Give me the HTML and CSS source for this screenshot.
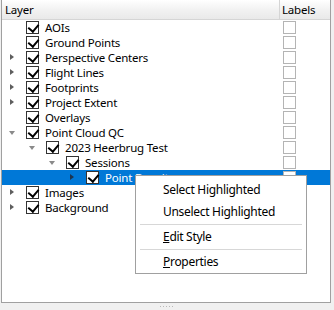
FILE: index.html
```html
<!DOCTYPE html>
<html lang="en">

<head>
  <meta charset="UTF-8">
  <title>Layers</title>
  <link rel="stylesheet" href="styles.css">
</head>

<body>
  <div class="panel">
    <div class="head">
      <div class="col-layer">Layer</div>
      <div class="col-labels">Labels</div>
    </div>

    <div class="rows">
      <div class="row">
        <div class="col-layer"><span class="arrow"></span><span class="check on"></span><span class="name">AOIs</span></div>
        <div class="col-labels"><span class="check"></span></div>
      </div>
      <div class="row">
        <div class="col-layer"><span class="arrow"></span><span class="check on"></span><span class="name">Ground Points</span></div>
        <div class="col-labels"><span class="check"></span></div>
      </div>
      <div class="row">
        <div class="col-layer"><span class="arrow closed"></span><span class="check on"></span><span class="name">Perspective Centers</span></div>
        <div class="col-labels"><span class="check"></span></div>
      </div>
      <div class="row">
        <div class="col-layer"><span class="arrow closed"></span><span class="check on"></span><span class="name">Flight Lines</span></div>
        <div class="col-labels"><span class="check"></span></div>
      </div>
      <div class="row">
        <div class="col-layer"><span class="arrow closed"></span><span class="check on"></span><span class="name">Footprints</span></div>
        <div class="col-labels"><span class="check"></span></div>
      </div>
      <div class="row">
        <div class="col-layer"><span class="arrow closed"></span><span class="check on"></span><span class="name">Project Extent</span></div>
        <div class="col-labels"><span class="check"></span></div>
      </div>
      <div class="row">
        <div class="col-layer"><span class="arrow"></span><span class="check on"></span><span class="name">Overlays</span></div>
        <div class="col-labels"><span class="check"></span></div>
      </div>
      <div class="row">
        <div class="col-layer"><span class="arrow open"></span><span class="check on"></span><span class="name">Point Cloud QC</span></div>
        <div class="col-labels"><span class="check"></span></div>
      </div>
      <div class="row">
        <div class="col-layer lvl1"><span class="arrow open"></span><span class="check on"></span><span class="name">2023 Heerbrug Test</span></div>
        <div class="col-labels"><span class="check"></span></div>
      </div>
      <div class="row">
        <div class="col-layer lvl2"><span class="arrow open"></span><span class="check on"></span><span class="name">Sessions</span></div>
        <div class="col-labels"><span class="check"></span></div>
      </div>
      <div class="row selected">
        <div class="col-layer lvl3"><span class="arrow closed"></span><span class="check on"></span><span class="name">Point Density</span></div>
        <div class="col-labels"><span class="check"></span></div>
      </div>
      <div class="row">
        <div class="col-layer"><span class="arrow closed"></span><span class="check on"></span><span class="name">Images</span></div>
        <div class="col-labels"></div>
      </div>
      <div class="row">
        <div class="col-layer"><span class="arrow closed"></span><span class="check on"></span><span class="name">Background</span></div>
        <div class="col-labels"></div>
      </div>
    </div>
  </div>

  <div class="grip"><span class="dots"></span></div>

  <!-- context menu over the tree -->
  <div class="menu">
    <div class="item">Select Highlighted</div>
    <div class="item">Unselect Highlighted</div>
    <div class="sep"></div>
    <div class="item"><u>E</u>dit Style</div>
    <div class="sep"></div>
    <div class="item"><u>P</u>roperties</div>
  </div>
</body>

</html>
```

FILE: styles.css
```css
* {
  box-sizing: border-box;
}

body {
  margin: 0;
  width: 334px;
  height: 310px;
  background-color: #f0f0f0;
  font-family: "Noto Sans", sans-serif;
  font-size: 11.5px;
  letter-spacing: -0.2px;
  color: #000;
  position: relative;
  overflow: hidden;
}

.panel {
  margin-left: 1px;
  width: 330px;
  height: 303px;
  background-color: #fff;
  border: 1px solid #a0a0a0;
  border-top: none;
  display: flex;
  flex-direction: column;
}

.head {
  display: flex;
  height: 20px;
  border-bottom: 1px solid #d5d5d5;
  background: linear-gradient(#ffffff, #f2f2f2 50%, #e9e9e9);
}

.head .col-layer {
  width: 278px;
  padding-left: 3px;
  border-right: 1px solid #d5d5d5;
  line-height: 19px;
}

.head .col-labels {
  flex: 1;
  padding-left: 2px;
  line-height: 19px;
}

.row {
  display: flex;
  height: 15px;
  line-height: 15px;
}

.row .col-layer {
  width: 278px;
  display: flex;
  align-items: center;
}

.row .col-labels {
  flex: 1;
  display: flex;
  align-items: center;
  padding-left: 3px;
}

.lvl1 {
  padding-left: 20px;
}

.lvl2 {
  padding-left: 40px;
}

.lvl3 {
  padding-left: 60px;
}

.row.selected {
  background-color: #0078d7;
  color: #fff;
}

.arrow {
  width: 20px;
  height: 15px;
  margin-right: 4px;
  position: relative;
  flex: none;
}

.arrow.closed::after {
  content: "";
  position: absolute;
  left: 8px;
  top: 4px;
  border-top: 3.5px solid transparent;
  border-bottom: 3.5px solid transparent;
  border-left: 4px solid #5e5e5e;
}

.arrow.open::after {
  content: "";
  position: absolute;
  left: 7px;
  top: 6px;
  border-left: 3.5px solid transparent;
  border-right: 3.5px solid transparent;
  border-top: 4px solid #8a8a8a;
}

.selected .arrow.closed::after {
  border-left-color: #1c3550;
}

.check {
  width: 13px;
  height: 13px;
  border: 1px solid #b4b4b4;
  background-color: #fff;
  flex: none;
  position: relative;
}

.check.on {
  border-color: #333;
}

.check.on::after {
  content: "";
  position: absolute;
  left: 3px;
  top: 0px;
  width: 5px;
  height: 8px;
  border-right: 2px solid #000;
  border-bottom: 2px solid #000;
  transform: rotate(40deg);
}

.name {
  margin-left: 6px;
  white-space: nowrap;
}

.grip {
  height: 7px;
  display: flex;
  justify-content: center;
  align-items: center;
}

.grip .dots {
  width: 14px;
  height: 1px;
  background: repeating-linear-gradient(90deg, #b9b9b9 0 1px, transparent 1px 3px);
}

.menu {
  position: absolute;
  left: 135px;
  top: 175px;
  width: 172px;
  padding: 3px 0 0;
  background-color: #fff;
  border: 1px solid #a0a0a0;
  font-size: 12px;
  letter-spacing: -0.3px;
}

.menu .item {
  height: 22px;
  line-height: 22px;
  padding-left: 27px;
  white-space: nowrap;
}

.menu .sep {
  height: 1px;
  margin: 1px 4px;
  background-color: #d7d7d7;
}
```
